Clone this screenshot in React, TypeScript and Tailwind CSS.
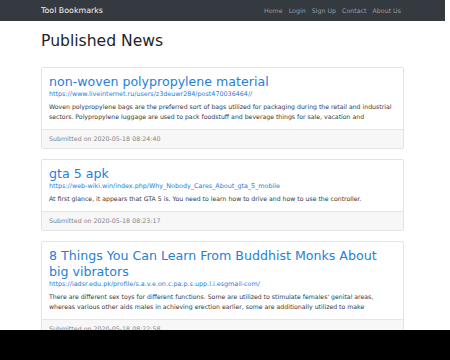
import React from "react";

const font = { fontFamily: '"DejaVu Sans", "Liberation Sans", sans-serif' };

type Item = { title: string; url: string; desc: string; date: string };

const items: Item[] = [
  {
    title: "non-woven polypropylene material",
    url: "https://www.liveinternet.ru/users/z3deuwr284/post470036464//",
    desc: "Woven polypropylene bags are the preferred sort of bags utilized for packaging during the retail and industrial sectors. Polypropylene luggage are used to pack foodstuff and beverage things for sale, vacation and",
    date: "2020-05-18 08:24:40",
  },
  {
    title: "gta 5 apk",
    url: "https://web-wiki.win/index.php/Why_Nobody_Cares_About_gta_5_mobile",
    desc: "At first glance, it appears that GTA 5 is. You need to learn how to drive and how to use the controller.",
    date: "2020-05-18 08:23:17",
  },
  {
    title: "8 Things You Can Learn From Buddhist Monks About big vibrators",
    url: "https://iadsr.edu.pk/profile/s.a.v.e.on.c.pa.p.s.upp.l.i.esgmail-com/",
    desc: "There are different sex toys for different functions. Some are utilized to stimulate females' genital areas, whereas various other aids males in achieving erection earlier, some are additionally utilized to make",
    date: "2020-05-18 08:22:58",
  },
];

function Card({ item }: { item: Item }) {
  return (
    <div className="border border-[#e3e3e3] rounded-[2px] bg-white mb-[10px]">
      <div className="px-[7px] pt-[6px] pb-[7px]">
        <div className="text-[12.6px] leading-[16px] text-[#2680d8]">{item.title}</div>
        <div className="text-[6.4px] leading-[9px] text-[#2680d8]">{item.url}</div>
        <div className="mt-[3px] text-[6.2px] leading-[10px] text-[#34373a]">{item.desc}</div>
      </div>
      <div className="border-t border-[#e6e6e6] bg-[#f7f7f7] px-[7px] h-[19px] flex items-center text-[6.3px] text-[#7d8388]">
        Submitted on {item.date}
      </div>
    </div>
  );
}

export default function App() {
  return (
    <div style={font} className="w-[450px] h-[360px] bg-white overflow-hidden flex flex-col">
      <div className="h-[330px] overflow-hidden w-[445px]">
        <div className="h-[21px] bg-[#343a40] flex items-center px-[41px] justify-between">
          <div className="text-[7.9px] text-[#f2f2f2]">Tool Bookmarks</div>
          <div className="flex gap-[6px] text-[6.3px] text-[#9a9ea2] mr-[3px]">
            <span>Home</span>
            <span>Login</span>
            <span>Sign Up</span>
            <span>Contact</span>
            <span>About Us</span>
          </div>
        </div>
        <div className="px-[41px] w-[445px]">
          <div className="pt-[10px] text-[15.6px] leading-[20px] text-[#212529] h-[46px]">Published News</div>
          {items.map((it) => (
            <Card key={it.title} item={it} />
          ))}
        </div>
      </div>
      <div className="flex-1 bg-black" />
    </div>
  );
}
